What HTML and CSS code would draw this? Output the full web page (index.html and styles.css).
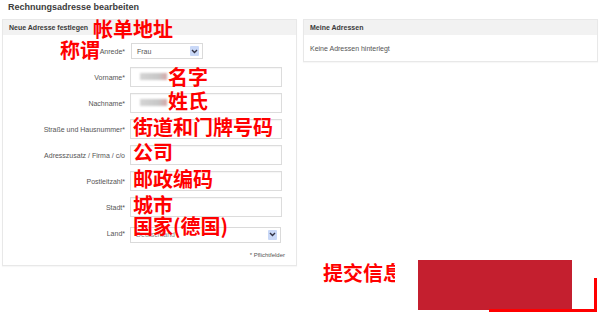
FILE: index.html
```html
<!DOCTYPE html>
<html lang="de">
<head>
    <meta charset="UTF-8">
    <title>Rechnungsadresse bearbeiten</title>
    <link rel="stylesheet" href="styles.css">
</head>
<body>
    <div id="page">
        <h1>Rechnungsadresse bearbeiten</h1>

        <div class="panels">
            <!-- Neue Adresse -->
            <div class="panel panel-form">
                <div class="panel-head">Neue Adresse festlegen</div>
                <div class="panel-body">
                    <div class="row">
                        <label>Anrede*</label>
                        <div class="select select-small">
                            <span>Frau</span>
                            <span class="arrow"><svg width="7" height="5" viewBox="0 0 7 5"><path d="M1 1 L3.5 3.5 L6 1" fill="none" stroke="#334" stroke-width="1.4"/></svg></span>
                        </div>
                    </div>
                    <div class="row">
                        <label>Vorname*</label>
                        <div class="field"><input type="text"><span class="blur"></span></div>
                    </div>
                    <div class="row">
                        <label>Nachname*</label>
                        <div class="field"><input type="text"><span class="blur"></span></div>
                    </div>
                    <div class="row">
                        <label>Straße und Hausnummer*</label>
                        <div class="field"><input type="text"></div>
                    </div>
                    <div class="row">
                        <label>Adresszusatz / Firma / c/o</label>
                        <div class="field"><input type="text"></div>
                    </div>
                    <div class="row">
                        <label>Postleitzahl*</label>
                        <div class="field"><input type="text"></div>
                    </div>
                    <div class="row">
                        <label>Stadt*</label>
                        <div class="field"><input type="text"></div>
                    </div>
                    <div class="row">
                        <label>Land*</label>
                        <div class="select select-wide">
                            <span>Deutschland</span>
                            <span class="arrow"><svg width="7" height="5" viewBox="0 0 7 5"><path d="M1 1 L3.5 3.5 L6 1" fill="none" stroke="#334" stroke-width="1.4"/></svg></span>
                        </div>
                    </div>
                    <div class="required">* Pflichtfelder</div>
                </div>
            </div>

            <!-- Meine Adressen -->
            <div class="panel panel-list">
                <div class="panel-head">Meine Adressen</div>
                <div class="panel-body">Keine Adressen hinterlegt</div>
            </div>
        </div>

        <!-- Notes drawn over the screenshot -->
        <span class="note" style="left:93px; top:19px;">帐单地址</span>
        <span class="note" style="left:60px; top:40px;">称谓</span>
        <span class="note" style="left:168px; top:67px;">名字</span>
        <span class="note" style="left:168px; top:91px;">姓氏</span>
        <span class="note" style="left:133px; top:117px;">街道和门牌号码</span>
        <span class="note" style="left:133px; top:142px;">公司</span>
        <span class="note" style="left:133px; top:169px;">邮政编码</span>
        <span class="note" style="left:133px; top:195px;">城市</span>
        <span class="note" style="left:133px; top:216px;">国家(德国)</span>
        <span class="note note-cut" style="left:323px; top:263px;">提交信息</span>

        <div class="submit-box"></div>
        <div class="submit-frame"></div>
    </div>
</body>
</html>
```

FILE: styles.css
```css
body {
    margin: 0;
    padding: 0;
    background-color: #fff;
    font-family: 'Liberation Sans', Arial, sans-serif;
    color: #444;
}

#page {
    position: relative;
    width: 600px;
    height: 315px;
    overflow: hidden;
    padding: 0 2px;
    box-sizing: border-box;
}

h1 {
    margin: 0 0 6px 6px;
    padding-top: 1px;
    font-size: 9px;
    line-height: 12px;
    font-weight: bold;
    color: #3c3c3c;
}

.panels {
    display: flex;
    align-items: flex-start;
    gap: 6px;
}

.panel {
    width: 295px;
    border: 1px solid #e8e8e8;
    box-sizing: border-box;
    background-color: #fff;
    box-shadow: 0 1px 1px rgba(0, 0, 0, 0.03);
}

.panel-head {
    height: 15px;
    line-height: 15px;
    padding-left: 6px;
    background-color: #f2f2f2;
    font-size: 7px;
    font-weight: bold;
    color: #3a3a3a;
}

.panel-form .panel-body {
    padding: 6px 11px 5px 0;
}

.row {
    display: grid;
    grid-template-columns: 122px 1fr;
    column-gap: 5px;
    align-items: center;
    height: 20px;
    margin-bottom: 6px;
}

.row label {
    text-align: right;
    font-size: 7px;
    color: #555;
}

.field {
    position: relative;
    width: 152px;
    height: 20px;
}

.field input {
    width: 100%;
    height: 20px;
    box-sizing: border-box;
    border: 1px solid #dcdcdc;
    box-shadow: inset 0 1px 1px rgba(0, 0, 0, 0.04);
    margin: 0;
    padding: 0 4px;
    background: #fff;
}

.blur {
    position: absolute;
    left: 10px;
    top: 6px;
    width: 27px;
    height: 7px;
    background: linear-gradient(to right, #d4d4d4, #c6c6c6 70%, #d6a6a6);
    filter: blur(1.3px);
}

.select {
    display: flex;
    align-items: center;
    justify-content: space-between;
    height: 16px;
    box-sizing: border-box;
    border: 1px solid #dadada;
    padding: 0 3px 0 5px;
    font-size: 7px;
    color: #555;
    background: #fff;
}

.select-small {
    width: 72px;
    margin-left: 1px;
}

.select-wide {
    width: 151px;
    margin-top: 3px;
    color: #888;
}

.arrow {
    display: flex;
    align-items: center;
    justify-content: center;
    width: 9px;
    height: 10px;
    background-color: #c9d8f7;
    border-radius: 1px;
}

.required {
    margin-top: 7px;
    text-align: right;
    font-size: 6px;
    line-height: 10px;
    color: #555;
}

.panel-list .panel-body {
    padding: 0 6px;
    height: 26px;
    line-height: 27px;
    font-size: 7px;
    color: #555;
}

.note {
    position: absolute;
    font-family: 'Noto Sans CJK SC', sans-serif;
    font-size: 20px;
    line-height: 20px;
    font-weight: bold;
    color: #ff0000;
    white-space: nowrap;
}

.note-cut {
    width: 72px;
    overflow: hidden;
}

.submit-box {
    position: absolute;
    left: 418px;
    top: 260px;
    width: 154px;
    height: 50px;
    background-color: #c41f2f;
}

.submit-frame {
    position: absolute;
    left: 489px;
    top: 278px;
    width: 108px;
    height: 34px;
    box-sizing: border-box;
    border-right: 3px solid #ff0000;
    border-bottom: 3px solid #ff0000;
}
```
